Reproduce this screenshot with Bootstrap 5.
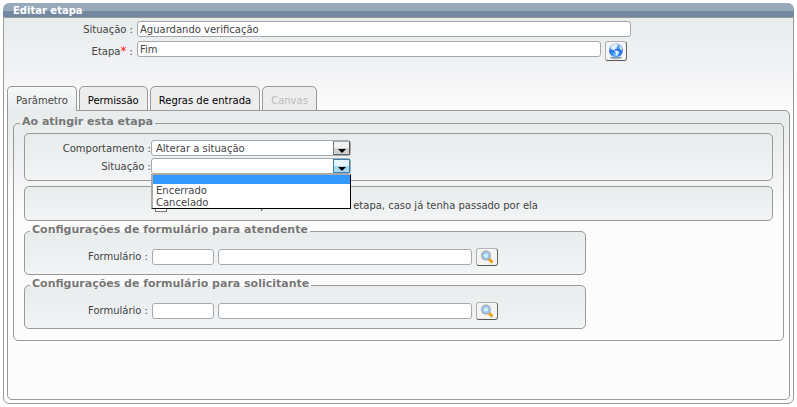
<!DOCTYPE html>
<html lang="pt-BR">
<head>
<meta charset="utf-8">
<meta name="viewport" content="width=device-width, initial-scale=1">
<title>Editar etapa</title>
<link href="https://cdn.jsdelivr.net/npm/bootstrap@5.3.0/dist/css/bootstrap.min.css" rel="stylesheet">
<style>
  :root { --line: #999; --fade: linear-gradient(#e8ecec 0, #f1f2f4 50px, #fcfcfc 90px); }
  body { font: 10px/12px "DejaVu Sans", Verdana, sans-serif; color: #444; background: #fff; }
  .panel-window { border-radius: 6px; min-height: 401px; margin: 3px; }
  .window-title { height: 14px; border-radius: 6px 6px 0 0; padding-left: 10px; font-size: 10px; line-height: 16px; font-weight: bold; color: #fff; background: linear-gradient(#98a9bb 8px, #7489a1 8px); }
  .window-body { border: 1px solid var(--line); border-radius: 0 0 6px 6px; background: var(--fade); padding: 3px; }
  .field-row { min-height: 16px; }
  .field-label { flex: none; text-align: right; }
  .top-label { width: 126px; padding-top: 2px; }
  .inner-label { width: 124px; padding-top: 1px; }
  .form-label-col { width: 121px; }
  .etapa-label { padding-top: 5px; }
  .required-mark { color: #f22; font-size: 12px; line-height: 10px; }
  .form-control.field { font-size: 10px; line-height: 12px; height: 16px; min-height: 0; border: 1px solid #a3a9ae; border-radius: 3px; padding: 0 2px; color: #444; background: #fff; }
  .w-situacao { width: 494px; }
  .form-control.w-etapa { width: 464px; }
  .w-code { width: 62px; }
  .w-name { width: 254px; }
  .btn.icon-btn { width: 22px; height: 18px; padding: 0; border: 1px solid; border-color: #b5b5b5 #666 #555 #b0b0b0; border-radius: 3px; background: #f4f4f4; flex: none; }
  .btn.globe-btn { height: 20px; }
  .tabs.nav-tabs { border: 0; gap: 2px; margin-top: 25px; margin-bottom: -1px; position: relative; }
  .tabs .nav-link { height: 25px; margin: 0; padding: 8px 8px 0; border: 1px solid var(--line); border-radius: 5px 5px 0 0; background: #ededed; color: #000; line-height: 12px; }
  .tabs .nav-link.active { background: linear-gradient(#f6f8f8, #e8ecec); color: #444; border-color: var(--line); border-bottom: 0; }
  .tabs .nav-link.disabled { color: #bbb; border-color: var(--line); background: #ededed; }
  .tab-body { border: 1px solid var(--line); border-radius: 0 5px 5px 5px; background: var(--fade); min-height: 289px; padding: 5px 5px 4px; }
  .box { border: 1px solid var(--line); border-radius: 5px; background: var(--fade); min-width: 0; }
  .box > legend { font-size: 11px; line-height: 12px; font-weight: bold; color: #777; padding: 0 2px 3px; margin: 0 0 0 3px; }
  .outer-box { padding: 2px 10px 11px; }
  .outer-box > legend { margin-left: -4px; }
  .plain-box { padding: 6px 2px; background: linear-gradient(#e8ecec, #f2f4f5); }
  .second-row { margin-top: 2px; }
  .config-box { max-width: 562px; margin-top: 3px; padding: 9px 2px 8px; background: linear-gradient(#e8ecec, #f2f4f5); }
  .form-select.picker { font-size: 10px; line-height: 12px; width: 100%; height: 16px; border: 1px solid #a3a9ae; border-radius: 3px; padding: 1px 20px 0 4px; color: #444; background: #fff; }
  .picker-wrap { width: 200px; }
  .picker-arrow { right: 1px; top: 1px; width: 17px; height: 14px; border: 1px solid; border-color: #aaa #555 #666 #777; background: linear-gradient(#f2f2f2 6px, #cfcfcf 6px); pointer-events: none; }
  .picker-arrow::after { content: ""; position: absolute; left: 4px; bottom: 1px; border: 4px solid transparent; border-top-color: #000; border-bottom: 0; }
  .picker-arrow.is-open { border-color: #3c7fb1; background: linear-gradient(#e5f4fc 6px, #a6d9f4 6px); }
  .option-list { top: 16px; left: 0; width: 200px; border: 1px solid #000; border-left: 2px solid #aaa; border-top-color: #aaa; background: #fff; z-index: 5; }
  .option-list .opt { display: block; width: 100%; height: 12px; border: 0; padding: 1px 3px 0; text-align: left; font-size: 10px; line-height: 12px; color: #444; background: transparent; }
  .option-list .opt.selected { height: 9px; background: #39f; }
  .check-box { min-height: 34px; padding: 12px 2px 8px 130px; margin-top: 5px; }
  .check-label { padding-top: 1px; }
  .form-check-input.small-check { width: 12px; height: 12px; margin: 0 2px 0 0; border: 1px solid #777; border-radius: 0; flex: none; }
</style>
<script src="https://cdn.jsdelivr.net/npm/bootstrap@5.3.0/dist/js/bootstrap.bundle.min.js"></script>
</head>
<body>
<main class="panel-window d-flex flex-column">
  <h1 class="window-title mb-0">Editar etapa</h1>
  <form class="window-body flex-grow-1 d-flex flex-column">
    <div class="field-row d-flex align-items-center gap-1">
      <label class="field-label top-label" for="situacao">Situação :</label>
      <input id="situacao" class="form-control field w-situacao" value="Aguardando verificação">
    </div>
    <div class="field-row d-flex align-items-start gap-1 mt-1">
      <label class="field-label top-label etapa-label" for="etapa">Etapa<span class="required-mark">*</span> :</label>
      <input id="etapa" class="form-control field w-etapa" value="Fim">
      <button type="button" class="btn icon-btn globe-btn d-flex justify-content-center align-items-center" aria-label="Idiomas">
        <svg width="16" height="16" viewBox="0 0 16 16">
          <defs><radialGradient id="sea" cx=".45" cy=".85" r=".9"><stop offset="0" stop-color="#6cf"/><stop offset=".45" stop-color="#2b6be8"/><stop offset="1" stop-color="#9cc8f8"/></radialGradient></defs>
          <ellipse cx="8" cy="14.7" rx="6" ry="1.2" fill="#999"/>
          <circle cx="8" cy="7.4" r="7" fill="url(#sea)"/>
          <path d="M2.5 4Q4.5 1.2 8 1L10 2.5 8.5 4 9 5.5 7 6 6.5 7.5 4.5 6.5 3.5 7ZM6.5 7.5L9 7.6 11.3 9 10 11.2 8.7 13 7.8 11.5 7.5 9.3ZM11.5 3L13.7 4.8 14 7 12 6Z" fill="#eef7ff" opacity=".92"/>
        </svg>
      </button>
    </div>
    <ul class="nav nav-tabs tabs">
      <li class="nav-item"><a class="nav-link active" href="#parametro" aria-current="page">Parâmetro</a></li>
      <li class="nav-item"><a class="nav-link" href="#permissao">Permissão</a></li>
      <li class="nav-item"><a class="nav-link" href="#regras">Regras de entrada</a></li>
      <li class="nav-item"><a class="nav-link disabled" href="#canvas" aria-disabled="true">Canvas</a></li>
    </ul>
    <section class="tab-body flex-grow-1" id="parametro">
      <fieldset class="box outer-box">
        <legend class="float-none w-auto">Ao atingir esta etapa</legend>
        <div class="box plain-box">
          <div class="field-row d-flex align-items-center">
            <label class="field-label inner-label" for="comportamento">Comportamento :</label>
            <div class="picker-wrap position-relative">
              <select id="comportamento" class="form-select picker"><option>Alterar a situação</option></select>
              <span class="picker-arrow position-absolute"></span>
            </div>
          </div>
          <div class="field-row d-flex align-items-center second-row">
            <label class="field-label inner-label" for="nova-situacao">Situação :</label>
            <div class="picker-wrap position-relative">
              <select id="nova-situacao" class="form-select picker"><option></option><option>Encerrado</option><option>Cancelado</option></select>
              <span class="picker-arrow is-open position-absolute"></span>
              <div class="option-list position-absolute" role="listbox" aria-label="Situação">
                <button type="button" class="opt selected" role="option" aria-selected="true" aria-label="Nenhuma"></button>
                <button type="button" class="opt" role="option">Encerrado</button>
                <button type="button" class="opt" role="option">Cancelado</button>
              </div>
            </div>
          </div>
        </div>
        <div class="box plain-box check-box d-flex align-items-center">
          <input type="checkbox" id="repetir" class="form-check-input small-check">
          <label class="check-label" for="repetir">Não executar comportamento desta etapa, caso já tenha passado por ela</label>
        </div>
        <fieldset class="box config-box">
          <legend class="float-none w-auto">Configurações de formulário para atendente</legend>
          <div class="d-flex align-items-center gap-1">
            <label class="field-label form-label-col" for="form-atendente">Formulário :</label>
            <input id="form-atendente" class="form-control field w-code">
            <input class="form-control field w-name" aria-label="Nome do formulário do atendente">
            <button type="button" class="btn icon-btn d-flex justify-content-center align-items-center" aria-label="Pesquisar formulário do atendente">
              <svg width="14" height="14" viewBox="0 0 14 14"><path d="M8.8 8.8L11.6 11.6" stroke="#f0a010" stroke-width="3" stroke-linecap="round"/><circle cx="6" cy="5.6" r="4.4" fill="#b4dcff" stroke="#a3a8b0" stroke-width="1.2"/><circle cx="6" cy="5.6" r="2.8" fill="#d8efff" stroke="#7db9f5"/></svg>
            </button>
          </div>
        </fieldset>
        <fieldset class="box config-box">
          <legend class="float-none w-auto">Configurações de formulário para solicitante</legend>
          <div class="d-flex align-items-center gap-1">
            <label class="field-label form-label-col" for="form-solicitante">Formulário :</label>
            <input id="form-solicitante" class="form-control field w-code">
            <input class="form-control field w-name" aria-label="Nome do formulário do solicitante">
            <button type="button" class="btn icon-btn d-flex justify-content-center align-items-center" aria-label="Pesquisar formulário do solicitante">
              <svg width="14" height="14" viewBox="0 0 14 14"><path d="M8.8 8.8L11.6 11.6" stroke="#f0a010" stroke-width="3" stroke-linecap="round"/><circle cx="6" cy="5.6" r="4.4" fill="#b4dcff" stroke="#a3a8b0" stroke-width="1.2"/><circle cx="6" cy="5.6" r="2.8" fill="#d8efff" stroke="#7db9f5"/></svg>
            </button>
          </div>
        </fieldset>
      </fieldset>
    </section>
  </form>
</main>
</body>
</html>
